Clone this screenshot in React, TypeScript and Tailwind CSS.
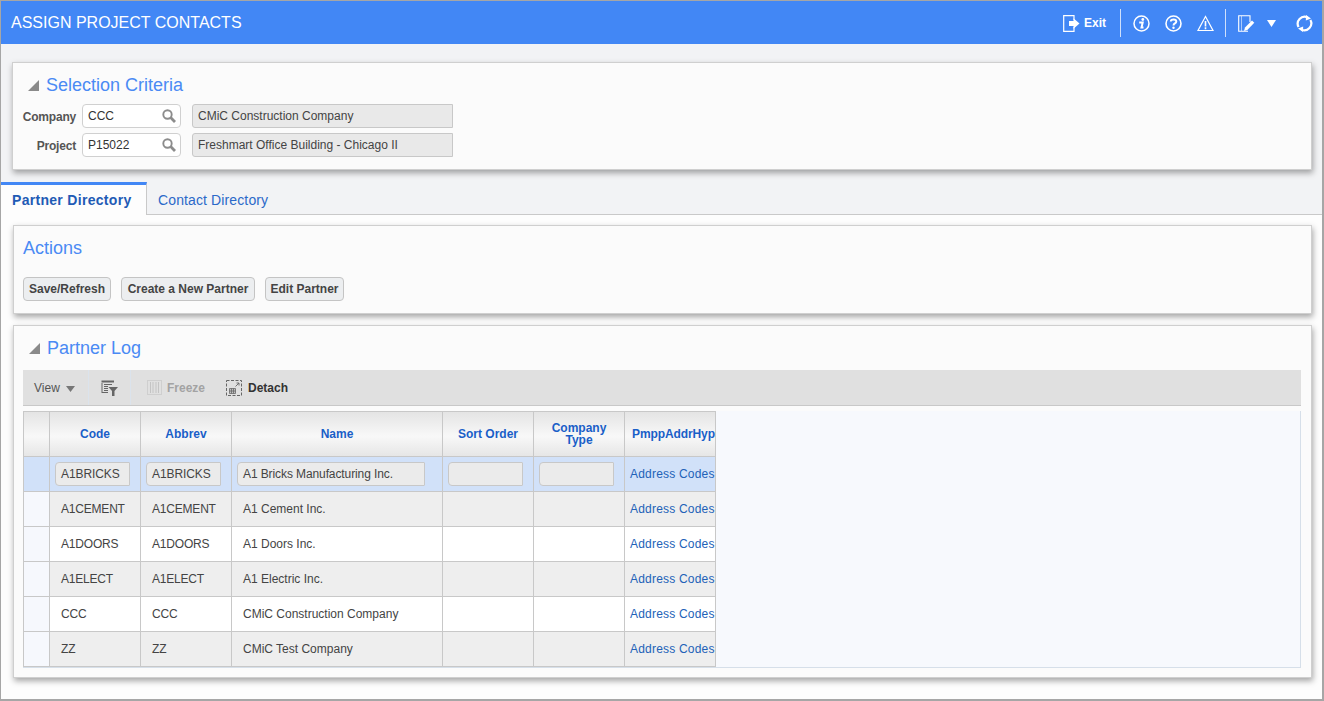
import React from "react";

const F = "[font-family:'Liberation_Sans',Arial,sans-serif]";

const Tri = () => (
  <svg width="12" height="12" viewBox="0 0 12 12" className="shrink-0">
    <path d="M12 1V12H1Z" fill="#8a8a8a" />
  </svg>
);

const Search = () => (
  <svg width="14" height="14" viewBox="0 0 14 14" className="shrink-0">
    <circle cx="5.5" cy="5.5" r="4.2" fill="none" stroke="#8c8c8c" strokeWidth="1.9" />
    <path d="M8.6 8.6L13 13" stroke="#8c8c8c" strokeWidth="2.8" />
  </svg>
);

const Lov = ({ label, value, desc }: { label: string; value: string; desc: string }) => (
  <div className="flex items-center h-[24px]">
    <div className="w-[63px] text-right text-[12px] font-bold text-[#555] mt-[1px] whitespace-nowrap tracking-[-0.2px]">{label}</div>
    <div className="ml-[6px] w-[99px] h-[24px] bg-white border border-[#d0d0d0] rounded-[4px] flex items-center justify-between pl-[5px] pr-[4px] text-[12px] text-[#333]">
      <span>{value}</span>
      <Search />
    </div>
    <div className="ml-[11px] w-[261px] h-[24px] bg-[#e9e9e9] border border-[#c8c8c8] rounded-l-[3px] flex items-center pl-[5px] text-[12px] text-[#444]">
      {desc}
    </div>
  </div>
);

const Btn = ({ children, w }: { children: string; w: string }) => (
  <button className={`${w} h-[24px] border border-[#c4c4c4] rounded-[4px] bg-[#eceef0] text-[12px] font-bold text-[#444] whitespace-nowrap`}>
    {children}
  </button>
);

const Panel = ({ className, children }: { className: string; children: React.ReactNode }) => (
  <div className={`bg-[#fbfbfb] border border-[#cfcfcf] shadow-[1px_3px_6px_rgba(0,0,0,0.35)] ${className}`}>{children}</div>
);

const rows = [
  ["A1CEMENT", "A1 Cement Inc."],
  ["A1DOORS", "A1 Doors Inc."],
  ["A1ELECT", "A1 Electric Inc."],
  ["CCC", "CMiC Construction Company"],
  ["ZZ", "CMiC Test Company"],
];

const grid = "grid grid-cols-[26px_91px_91px_211px_91px_91px_91px]";
const cell = "border-r border-b border-[#c8c8c8] flex items-center overflow-hidden whitespace-nowrap text-[12px]";
const head =
  "border-r border-b border-[#c8c8c8] flex items-center justify-center text-center text-[12px] font-bold text-[#1a5fc8] leading-[12px] bg-[linear-gradient(#e4e4e4,#f8f8f8_55%,#e6e6e6)] overflow-hidden";

const Field = ({ value, w }: { value: string; w: string }) => (
  <div className={`${w} ml-[5px] h-[24px] shrink-0 bg-[#ebebeb] border border-[#c8c8c8] rounded-l-[4px] rounded-r-[1px] flex items-center pl-[5px] text-[#444] tracking-[-0.1px]`}>
    {value}
  </div>
);

export default function App() {
  return (
    <div className={`${F} w-[1324px] h-[701px] overflow-hidden border border-b-2 border-r-2 border-[#a6a6a6] bg-[#fdfdfd] flex flex-col`}>
      {/* Header */}
      <div className="h-[43px] shrink-0 bg-[#4287f5] flex items-center pl-[10px] text-white">
        <div className="text-[16px] flex-1 pt-[1px]">ASSIGN PROJECT CONTACTS</div>
        <div className="flex items-center pt-[1px]">
          <svg width="17" height="17" viewBox="0 0 17 17">
            <path d="M11 5V0.7H0.7V16.3H11V12" fill="none" stroke="#fff" strokeWidth="1.2" />
            <path d="M6 6H10.5V3.2L16.5 8.5L10.5 13.8V11H6Z" fill="#fff" />
          </svg>
          <span className="ml-[4px] w-[22px] text-[12px] font-bold">Exit</span>
          <div className="ml-[14px] w-px h-[28px] bg-[#cfe0fb]" />
          <svg className="ml-[12px]" width="17" height="17" viewBox="0 0 17 17">
            <circle cx="8.5" cy="8.5" r="7.5" fill="none" stroke="#fff" strokeWidth="1.5" />
            <circle cx="9.8" cy="4.5" r="1.4" fill="#fff" />
            <path d="M6.2 7.4H9.7L8.5 12.4H10.5" fill="none" stroke="#fff" strokeWidth="2" />
          </svg>
          <svg className="ml-[15px]" width="17" height="17" viewBox="0 0 17 17">
            <circle cx="8.5" cy="8.5" r="7.5" fill="none" stroke="#fff" strokeWidth="1.6" />
            <path d="M5.8 6.6C5.8 3.6 11.3 3.7 11.3 6.6C11.3 8.6 8.5 8.3 8.5 10.5" fill="none" stroke="#fff" strokeWidth="2" />
            <circle cx="8.5" cy="12.8" r="1.2" fill="#fff" />
          </svg>
          <svg className="ml-[15px]" width="17" height="17" viewBox="0 0 17 17">
            <path d="M8.5 1.5L16 15.5H1Z" fill="none" stroke="#fff" strokeWidth="1.2" />
            <path d="M8.5 6V11.5M8.5 12.3V14.3" stroke="#fff" strokeWidth="1.6" />
          </svg>
          <div className="ml-[11px] w-px h-[28px] bg-[#cfe0fb]" />
          <svg className="ml-[12px]" width="17" height="17" viewBox="0 0 17 17">
            <path d="M12 7V0.7H0.7V16.3H10" fill="none" stroke="#fff" strokeWidth="1.1" />
            <path d="M3.5 1V16" stroke="#fff" strokeWidth="1" opacity="0.55" />
            <path d="M6 16L7 12.5L14 5.5L16.3 7.8L9.3 15Z" fill="#fff" />
          </svg>
          <svg className="ml-[12px]" width="9" height="7" viewBox="0 0 9 7">
            <path d="M0 0H9L4.5 7Z" fill="#fff" />
          </svg>
          <svg className="ml-[20px] mr-[9px]" width="17" height="17" viewBox="0 0 17 17">
            <path d="M2.6 12A7 7 0 0 1 11.5 2.2" fill="none" stroke="#fff" strokeWidth="2.2" />
            <path d="M14.4 5A7 7 0 0 1 5.5 14.8" fill="none" stroke="#fff" strokeWidth="2.2" />
            <path d="M10 0L15 3.6L9.8 5.5Z" fill="#fff" />
            <path d="M7 17L2 13.4L7.2 11.5Z" fill="#fff" />
          </svg>
        </div>
      </div>

      {/* Top area */}
      <div className="h-[171px] shrink-0 bg-[#f2f3f5] flex flex-col">
        <Panel className="mt-[18px] ml-[11px] w-[1300px] h-[108px] pt-[10px]">
          <div className="flex items-center pl-[14px] h-[24px]">
            <Tri />
            <span className="ml-[7px] text-[18px] text-[#4a8af4]">Selection Criteria</span>
          </div>
          <div className="mt-[7px] flex flex-col gap-[5px]">
            <Lov label="Company" value="CCC" desc="CMiC Construction Company" />
            <Lov label="Project" value="P15022" desc="Freshmart Office Building - Chicago II" />
          </div>
        </Panel>
        {/* Tabs */}
        <div className="mt-[12px] h-[33px] flex border-b border-[#c9c9c9]">
          <div className="w-[146px] h-[33px] pt-[1px] border-t-[3px] border-t-[#4287f5] border-r border-r-[#c9c9c9] bg-[#fdfdfd] flex items-center pl-[11px] text-[14px] tracking-[0.3px] font-bold text-[#1f5bb5] whitespace-nowrap">
            Partner Directory
          </div>
          <div className="ml-[11px] pt-[4px] flex items-center text-[14px] tracking-[0.12px] text-[#2b69c9]">Contact Directory</div>
        </div>
      </div>

      {/* Actions */}
      <Panel className="mt-[10px] ml-[12px] w-[1299px] h-[89px] shrink-0 pt-[10px] pl-[9px]">
        <div className="text-[18px] leading-[24px] text-[#4a8af4]">Actions</div>
        <div className="mt-[17px] flex gap-[10px]">
          <Btn w="w-[88px]">Save/Refresh</Btn>
          <Btn w="w-[134px]">Create a New Partner</Btn>
          <Btn w="w-[79px]">Edit Partner</Btn>
        </div>
      </Panel>

      {/* Partner Log */}
      <Panel className="mt-[11px] ml-[12px] w-[1299px] h-[353px] shrink-0 pt-[10px] pl-[9px]">
        <div className="flex items-center h-[24px] pl-[5px]">
          <Tri />
          <span className="ml-[7px] text-[18px] text-[#4a8af4]">Partner Log</span>
        </div>
        <div className="mt-[10px] w-[1278px] h-[36px] bg-[#e0e0e0] border-b border-[#c8c8c8] flex items-center text-[12px]">
          <div className="w-[66px] h-full flex items-center pl-[11px] border-r border-[#dbe3ec] text-[#555]">
            View
            <svg className="ml-[6px] mt-[2px]" width="9" height="6" viewBox="0 0 9 6">
              <path d="M0 0H9L4.5 6Z" fill="#777" />
            </svg>
          </div>
          <div className="w-[42px] h-full flex items-center justify-center border-r border-[#dbe3ec]">
            <svg width="17" height="16" viewBox="0 0 17 16">
              <path d="M0.5 0.5H13V2.5H0.5ZM0.5 3V13H7V12H1.5V3Z" fill="#666" />
              <path d="M3 4.5H11M3 6.5H7M3 8.5H7M3 10.5H7" stroke="#666" strokeWidth="1" />
              <path d="M7.5 7H17L13.5 11V16H11V11Z" fill="#666" />
            </svg>
          </div>
          <svg className="ml-[16px]" width="15" height="15" viewBox="0 0 15 15">
            <rect x="0.5" y="0.5" width="14" height="14" fill="none" stroke="#cfcfcf" />
            <path d="M3.5 2V13M6 2V13M9 2V13M11.5 2V13" stroke="#c4c4c4" strokeWidth="1" />
          </svg>
          <span className="ml-[5px] font-bold text-[#a3a3a3]">Freeze</span>
          <svg className="ml-[21px]" width="16" height="16" viewBox="0 0 16 16">
            <rect x="0.5" y="0.5" width="15" height="15" fill="none" stroke="#666" strokeDasharray="3 1.5" />
            <path d="M3.5 8.5H9.5V13.5H3.5ZM3.5 10.2H9.5M3.5 11.8H9.5M5.5 8.5V13.5M7.5 8.5V13.5" fill="none" stroke="#666" strokeWidth="0.8" />
            <path d="M9.5 6.5L13 3M10.5 3H13V5.5" fill="none" stroke="#666" strokeWidth="0.9" />
          </svg>
          <span className="ml-[6px] font-bold text-[#333]">Detach</span>
        </div>
        <div className="mt-[5px] w-[1278px] h-[257px] bg-[#f7f9fd] border-r border-b border-[#d6dfe9] flex">
          <div className="w-[693px] border-t border-l border-[#c8c8c8]">
            <div className={`${grid} h-[45px]`}>
              <div className={head} />
              <div className={head}>Code</div>
              <div className={head}>Abbrev</div>
              <div className={head}>Name</div>
              <div className={head}>Sort Order</div>
              <div className={head}>
                Company
                <br />
                Type
              </div>
              <div className={`${head} !justify-start pl-[7px] whitespace-nowrap tracking-[-0.1px]`}>PmppAddrHyperlink</div>
            </div>
            <div className={`${grid} h-[35px] bg-[#d1e1f9] text-[#444]`}>
              <div className={cell} />
              <div className={cell}>
                <Field value="A1BRICKS" w="w-[75px]" />
              </div>
              <div className={cell}>
                <Field value="A1BRICKS" w="w-[75px]" />
              </div>
              <div className={cell}>
                <Field value="A1 Bricks Manufacturing Inc." w="w-[188px]" />
              </div>
              <div className={cell}>
                <Field value="" w="w-[75px]" />
              </div>
              <div className={cell}>
                <Field value="" w="w-[75px]" />
              </div>
              <div className={`${cell} pl-[5px] text-[#2262b8] tracking-[0.2px]`}>Address Codes</div>
            </div>
            {rows.map(([code, name], i) => (
              <div key={code} className={`${grid} h-[35px] text-[#444] ${i % 2 === 0 ? "bg-[#eeeeee]" : "bg-white"}`}>
                <div className={`${cell} bg-[#f6f8fd]`} />
                <div className={`${cell} pl-[11px] tracking-[-0.2px]`}>{code}</div>
                <div className={`${cell} pl-[11px] tracking-[-0.2px]`}>{code}</div>
                <div className={`${cell} pl-[11px]`}>{name}</div>
                <div className={cell} />
                <div className={cell} />
                <div className={`${cell} pl-[5px] text-[#2262b8] tracking-[0.2px]`}>Address Codes</div>
              </div>
            ))}
          </div>
        </div>
      </Panel>
    </div>
  );
}
